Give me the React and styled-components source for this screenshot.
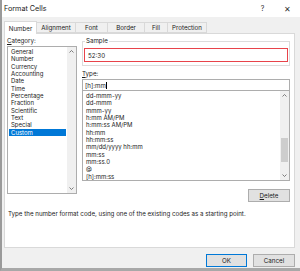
import React from "react";
import styled, { createGlobalStyle } from "styled-components";

const Global = createGlobalStyle`
  html, body { margin: 0; padding: 0; background: #f0f0f0; }
  body { font-family: Inter, "Open Sans", sans-serif; color: #1a1a1a; }
`;

const Window = styled.div`
  width: 300px;
  height: 271px;
  box-sizing: border-box;
  border-left: 2px solid #9a9a9a;
  border-bottom: 3px solid #a8a8a8;
  background: #f0f0f0;
  display: flex;
  flex-direction: column;
  overflow: hidden;
`;

const TitleBar = styled.div`
  height: 17px;
  background: #ffffff;
  display: flex;
  align-items: center;
  padding: 0 0 0 2px;
  font-size: 7.2px;
`;

const Title = styled.span`
  flex: 1;
`;

const TitleButton = styled.span`
  width: 25px;
  text-align: center;
  font-size: ${(p) => p.$size || 8}px;
  color: #333;
`;

const Body = styled.div`
  flex: 1;
  display: flex;
  flex-direction: column;
  padding: 3px 5px 0 2px;
`;

const TabRow = styled.div`
  display: flex;
  align-items: flex-end;
  height: 13px;
  position: relative;
  z-index: 1;
`;

const Tab = styled.div`
  box-sizing: border-box;
  width: ${(p) => p.$w}px;
  height: ${(p) => (p.$active ? 13 : 11)}px;
  margin-bottom: ${(p) => (p.$active ? -1 : 0)}px;
  display: flex;
  align-items: center;
  justify-content: center;
  font-size: 6.2px;
  background: ${(p) => (p.$active ? "#ffffff" : "#f0f0f0")};
  border: 1px solid #d9d9d9;
  border-bottom: ${(p) => (p.$active ? "none" : "1px solid #d9d9d9")};
  border-left: ${(p) => (p.$first || p.$active ? "1px solid #d9d9d9" : "none")};
`;

const Panel = styled.div`
  height: 215px;
  box-sizing: border-box;
  background: #ffffff;
  border: 1px solid #d9d9d9;
  padding: 3px 4px 0 2px;
  display: flex;
  flex-direction: column;
`;

const Columns = styled.div`
  display: flex;
  gap: 5px;
`;

const LeftCol = styled.div`
  width: 70px;
  display: flex;
  flex-direction: column;
`;

const RightCol = styled.div`
  flex: 1;
  display: flex;
  flex-direction: column;
`;

const Label = styled.div`
  font-size: 6.2px;
  line-height: 8px;
  height: 9px;
  margin-top: ${(p) => p.$mt || 0}px;
`;

const Underline = styled.span`
  text-decoration: underline;
`;

const ListBox = styled.div`
  box-sizing: border-box;
  height: ${(p) => p.$h}px;
  border: 1px solid #adadad;
  display: flex;
  background: #fff;
`;

const Items = styled.div`
  flex: 1;
  padding: 1px 1px 0 1px;
  overflow: hidden;
`;

const Item = styled.div`
  font-size: 6px;
  line-height: 7.35px;
  height: 7.35px;
  padding-left: 2px;
  white-space: nowrap;
  background: ${(p) => (p.$selected ? "#0078d7" : "transparent")};
  color: ${(p) => (p.$selected ? "#ffffff" : "#1a1a1a")};
`;

const ScrollBar = styled.div`
  width: 9px;
  background: #f0f0f0;
  display: flex;
  flex-direction: column;
  align-items: center;
  justify-content: space-between;
  padding: 3px 0;
  position: relative;
`;

const Thumb = styled.div`
  position: absolute;
  left: 1px;
  right: 1px;
  top: ${(p) => p.$top}px;
  height: ${(p) => p.$h}px;
  background: #cdcdcd;
`;

const Arrow = styled.svg`
  width: 5px;
  height: 3px;
`;

const Fieldset = styled.div`
  position: relative;
  border: 1px solid #dcdcdc;
  margin-top: 4px;
  padding: 6px 1px 3px 1px;
`;

const Legend = styled.span`
  position: absolute;
  top: -5px;
  left: 2px;
  background: #fff;
  padding: 0 1px;
  font-size: 6.2px;
  line-height: 8px;
`;

const SampleBox = styled.div`
  box-sizing: border-box;
  height: 14px;
  border: 1.5px solid #e8434a;
  font-size: 6.2px;
  display: flex;
  align-items: center;
  padding-left: 3px;
`;

const TypeInput = styled.div`
  box-sizing: border-box;
  height: 11px;
  border: 1px solid #adadad;
  border-bottom: none;
  font-size: 6.2px;
  display: flex;
  align-items: center;
  padding-left: 2px;
`;

const Caret = styled.span`
  display: inline-block;
  width: 0.6px;
  height: 7px;
  background: #000;
  margin-left: 0.5px;
`;

const ButtonRow = styled.div`
  display: flex;
  justify-content: flex-end;
  margin-top: ${(p) => p.$mt || 0}px;
`;

const Button = styled.div`
  box-sizing: border-box;
  width: ${(p) => p.$w || 42}px;
  height: 13px;
  background: #e1e1e1;
  border: 1px solid ${(p) => (p.$default ? "#0078d7" : "#adadad")};
  font-size: 6.2px;
  display: flex;
  align-items: center;
  justify-content: center;
`;

const Hint = styled.div`
  font-size: 6.2px;
  margin-top: 8px;
  padding-left: 1px;
  white-space: nowrap;
`;

const Footer = styled.div`
  flex: 1;
  display: flex;
  justify-content: flex-end;
  align-items: flex-start;
  gap: 6px;
  padding-top: 6px;
`;

const Up = () => (
  <Arrow viewBox="0 0 5 3">
    <path d="M0.5 2.5 L2.5 0.5 L4.5 2.5" fill="none" stroke="#606060" strokeWidth="0.8" />
  </Arrow>
);
const Down = () => (
  <Arrow viewBox="0 0 5 3">
    <path d="M0.5 0.5 L2.5 2.5 L4.5 0.5" fill="none" stroke="#606060" strokeWidth="0.8" />
  </Arrow>
);

const tabs = [
  { name: "Number", w: 33, active: true },
  { name: "Alignment", w: 39 },
  { name: "Font", w: 32 },
  { name: "Border", w: 37 },
  { name: "Fill", w: 23 },
  { name: "Protection", w: 39 },
];

const categories = [
  "General", "Number", "Currency", "Accounting", "Date", "Time",
  "Percentage", "Fraction", "Scientific", "Text", "Special", "Custom",
];

const types = [
  "dd-mmm-yy", "dd-mmm", "mmm-yy", "h:mm AM/PM", "h:mm:ss AM/PM", "hh:mm",
  "hh:mm:ss", "mm/dd/yyyy hh:mm", "mm:ss", "mm:ss.0", "@", "[h]:mm:ss",
];

export default function App() {
  return (
    <>
      <Global />
      <Window>
        <TitleBar>
          <Title>Format Cells</Title>
          <TitleButton $size={7}>?</TitleButton>
          <TitleButton $size={8}>✕</TitleButton>
        </TitleBar>
        <Body>
          <TabRow>
            {tabs.map((t, i) => (
              <Tab key={t.name} $w={t.w} $active={t.active} $first={i === 0}>
                {t.name}
              </Tab>
            ))}
          </TabRow>
          <Panel>
            <Columns>
              <LeftCol>
                <Label>
                  <Underline>C</Underline>ategory:
                </Label>
                <ListBox $h={148}>
                  <Items>
                    {categories.map((c) => (
                      <Item key={c} $selected={c === "Custom"}>
                        {c}
                      </Item>
                    ))}
                  </Items>
                  <ScrollBar>
                    <Up />
                    <Down />
                  </ScrollBar>
                </ListBox>
              </LeftCol>
              <RightCol>
                <Fieldset>
                  <Legend>Sample</Legend>
                  <SampleBox>52:30</SampleBox>
                </Fieldset>
                <Label $mt={4}>
                  <Underline>T</Underline>ype:
                </Label>
                <TypeInput>
                  [h]:mm
                  <Caret />
                </TypeInput>
                <ListBox $h={91}>
                  <Items>
                    {types.map((t) => (
                      <Item key={t}>{t}</Item>
                    ))}
                  </Items>
                  <ScrollBar>
                    <Up />
                    <Thumb $top={47} $h={24} />
                    <Down />
                  </ScrollBar>
                </ListBox>
                <ButtonRow $mt={8}>
                  <Button $w={42}>
                    <Underline>D</Underline>elete
                  </Button>
                </ButtonRow>
              </RightCol>
            </Columns>
            <Hint>
              Type the number format code, using one of the existing codes as a starting point.
            </Hint>
          </Panel>
          <Footer>
            <Button $w={41} $default>
              OK
            </Button>
            <Button $w={42}>Cancel</Button>
          </Footer>
        </Body>
      </Window>
    </>
  );
}
